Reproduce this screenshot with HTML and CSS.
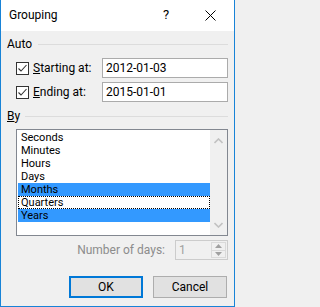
FILE: index.html
```html
<!DOCTYPE html>
<html>
<head>
<meta charset="utf-8">
<link rel="stylesheet" href="styles.css">
</head>
<body>
<div class="window">
  <div class="titlebar">
    <span class="title">Grouping</span>
    <span class="help">?</span>
    <span class="close"><svg width="11" height="11" viewBox="0 0 11 11"><path d="M0.5 0.5 L10.5 10.5 M10.5 0.5 L0.5 10.5" stroke="#000" stroke-width="1" fill="none"/></svg></span>
  </div>
  <div class="content">
    <div class="group-head head-auto"><span>Auto</span><div class="rule"></div></div>
    <div class="field-row row1">
      <span class="check"><svg width="11" height="11" viewBox="0 0 11 11"><path d="M1.5 5.5 L4 8 L9.5 2" stroke="#333" stroke-width="1.1" fill="none"/></svg></span>
      <span class="field-label"><u>S</u>tarting at:</span>
      <span class="textbox">2012-01-03</span>
    </div>
    <div class="field-row row2">
      <span class="check"><svg width="11" height="11" viewBox="0 0 11 11"><path d="M1.5 5.5 L4 8 L9.5 2" stroke="#333" stroke-width="1.1" fill="none"/></svg></span>
      <span class="field-label"><u>E</u>nding at:</span>
      <span class="textbox">2015-01-01</span>
    </div>
    <div class="group-head head-by"><span><u>B</u>y</span><div class="rule"></div></div>
    <div class="listbox">
      <div class="items">
        <div class="item">Seconds</div>
        <div class="item">Minutes</div>
        <div class="item">Hours</div>
        <div class="item">Days</div>
        <div class="item sel">Months</div>
        <div class="item focus">Quarters</div>
        <div class="item sel">Years</div>
      </div>
      <div class="scroll">
        <svg width="9" height="6" viewBox="0 0 9 6"><path d="M0.5 5 L4.5 1 L8.5 5" stroke="#c2c2c2" stroke-width="1.6" fill="none"/></svg>
        <svg width="9" height="6" viewBox="0 0 9 6"><path d="M0.5 1 L4.5 5 L8.5 1" stroke="#c2c2c2" stroke-width="1.6" fill="none"/></svg>
      </div>
    </div>
    <div class="days-row">
      <span class="days-label">Number of days:</span>
      <div class="spinner">
        <span class="spin-val">1</span>
        <div class="spin-btns">
          <div class="spin-btn"><svg width="7" height="4" viewBox="0 0 7 4"><path d="M0 4 L3.5 0 L7 4 Z" fill="#a0a0a0"/></svg></div>
          <div class="spin-btn"><svg width="7" height="4" viewBox="0 0 7 4"><path d="M0 0 L3.5 4 L7 0 Z" fill="#a0a0a0"/></svg></div>
        </div>
      </div>
    </div>
    <div class="buttons">
      <div class="btn btn-default">OK</div>
      <div class="btn">Cancel</div>
    </div>
  </div>
</div>
</body>
</html>
```
FILE: styles.css
```css
html, body {
  margin: 0;
  padding: 0;
  background: #f0f0f0;
}
.window {
  width: 235px;
  height: 307px;
  box-sizing: border-box;
  border: 1px solid #1883d7;
  border-top: none;
  background: #f0f0f0;
  font-family: Roboto, "Noto Sans", sans-serif;
  font-size: 12px;
  color: #000;
  overflow: hidden;
}
.titlebar {
  height: 31px;
  background: #fff;
  display: flex;
  align-items: center;
  padding-left: 8px;
}
.title {
  flex: 1;
  font-size: 12px;
  margin-top: -1px;
}
.help {
  width: 12px;
  font-size: 13px;
  margin-right: 30px;
  margin-top: -2px;
}
.close {
  width: 11px;
  height: 11px;
  margin-right: 18px;
  margin-top: -1px;
  display: flex;
}
.content {
  padding: 0 6px;
}
.group-head {
  display: flex;
  align-items: center;
  height: 14px;
}
.head-auto {
  margin-top: 6px;
}
.head-by {
  margin-top: 7px;
}
.rule {
  flex: 1;
  height: 1px;
  background: #dcdcdc;
  margin-left: 5px;
}
.head-auto .rule {
  margin-left: 6px;
}
.field-row {
  display: flex;
  align-items: center;
  height: 20px;
  padding-left: 9px;
}
.row1 {
  margin-top: 7px;
}
.row2 {
  margin-top: 4px;
}
.check {
  width: 11px;
  height: 11px;
  border: 1px solid #333;
  background: #fff;
  display: flex;
}
.field-label {
  width: 69px;
  margin-left: 4px;
}
.textbox {
  box-sizing: border-box;
  width: 126px;
  height: 20px;
  border: 1px solid #ababab;
  background: #fff;
  padding-left: 3px;
  line-height: 18px;
}
.listbox {
  box-sizing: border-box;
  margin: 6px 0 0 9px;
  width: 212px;
  height: 107px;
  border: 1px solid #828790;
  background: #fff;
  display: flex;
}
.items {
  flex: 1;
  padding: 1px 0 0 1px;
}
.item {
  box-sizing: border-box;
  height: 13px;
  line-height: 13px;
  font-size: 11px;
  padding-left: 3px;
}
.item.sel {
  background: #3399ff;
}
.item.focus {
  border: 1px dotted #000;
  padding-left: 2px;
  line-height: 11px;
}
.scroll {
  width: 17px;
  background: #f0f0f0;
  display: flex;
  flex-direction: column;
  align-items: center;
  justify-content: space-between;
  padding: 8px 0 7px;
}
.days-row {
  display: flex;
  justify-content: flex-end;
  align-items: center;
  margin-top: 4px;
  height: 20px;
}
.days-label {
  color: #8c8c8c;
  margin-right: 10px;
}
.spinner {
  box-sizing: border-box;
  width: 53px;
  height: 20px;
  border: 1px solid #cccccc;
  background: #f0f0f0;
  display: flex;
}
.spin-val {
  flex: 1;
  color: #a0a0a0;
  padding-left: 3px;
  line-height: 18px;
}
.spin-btns {
  width: 15px;
  display: flex;
  flex-direction: column;
  margin: 1px 1px 1px 0;
}
.spin-btn {
  flex: 1;
  display: flex;
  align-items: center;
  justify-content: center;
  background: #f0f0f0;
  border: 1px solid #dadada;
}
.spin-btn + .spin-btn {
  border-top: none;
}
.buttons {
  display: flex;
  justify-content: flex-end;
  margin-top: 16px;
  padding-right: 1px;
}
.btn {
  box-sizing: border-box;
  width: 74px;
  height: 22px;
  border: 1px solid #adadad;
  background: #e1e1e1;
  display: flex;
  align-items: center;
  justify-content: center;
  margin-left: 10px;
}
.btn-default {
  border: 2px solid #0078d7;
}
```
